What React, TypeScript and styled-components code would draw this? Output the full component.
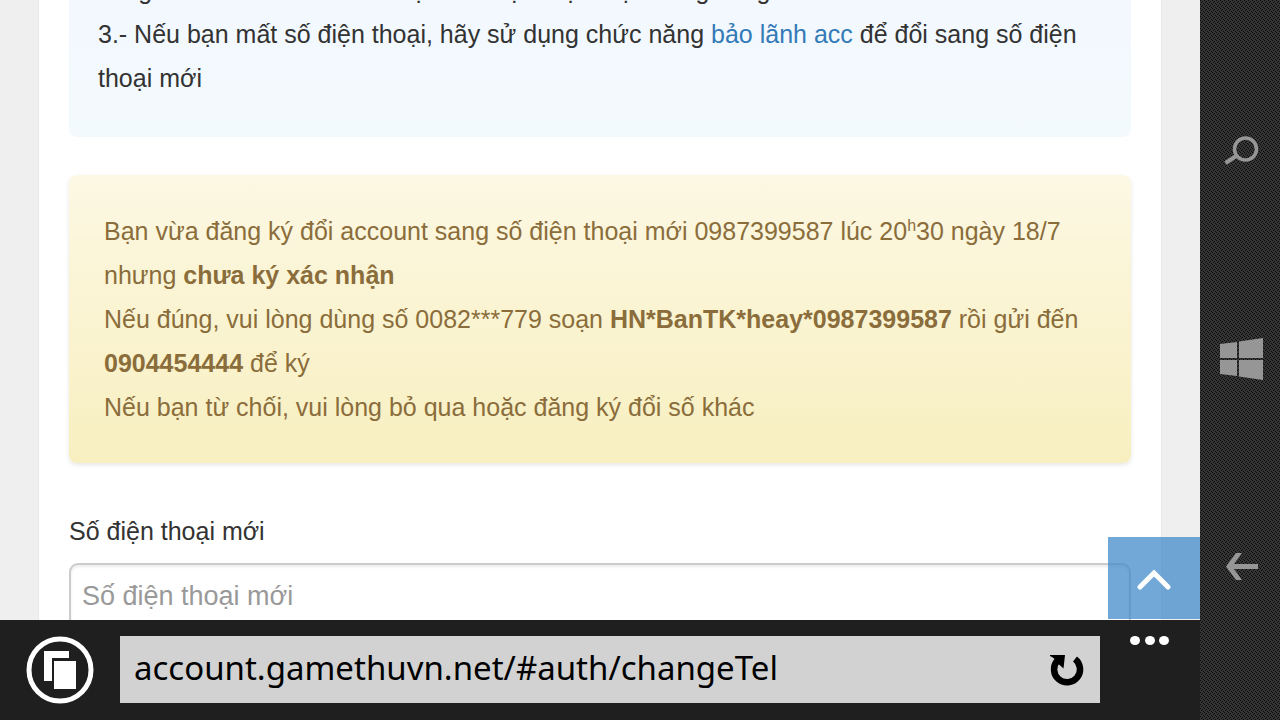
import React from 'react';
import styled, { createGlobalStyle } from 'styled-components';

const GlobalStyle = createGlobalStyle`
  *, *::before, *::after { box-sizing: border-box; }
  body { margin: 0; background: #efefef; }
  button { margin: 0; padding: 0; border: 0; background: none; cursor: pointer; }
`;

const Device = styled.div`
  display: flex;
  height: 100vh;
  overflow: hidden;
  font-family: 'Liberation Sans', Arial, sans-serif;
`;

const Screen = styled.div`
  display: flex;
  flex: 1;
  flex-direction: column;
  min-width: 0;
`;

const Viewport = styled.main`
  position: relative;
  flex: 1;
  min-height: 0;
  overflow: hidden;
  background: #efefef;
`;

const Page = styled.div`
  height: 100%;
  margin: 0 38px;
  padding: 0 30px;
  overflow: hidden;
  border: solid #e8e8e8;
  border-width: 0 1px;
  background: #fff;
  color: #333;
  font-size: 25px;
  line-height: 44px;
`;

const Callout = styled.section`
  border-radius: 8px;

  p { margin: 0; }
`;

const InfoCallout = styled(Callout)`
  margin-top: -32px;
  padding: 0 29px 37px;
  background: linear-gradient(#f2f8fe, #f3fafd);
`;

const WarningCallout = styled(Callout)`
  margin-top: 38px;
  padding: 34px 35px;
  background: linear-gradient(#fcf8e3, #f8efc0);
  box-shadow: 0 2px 4px rgba(0, 0, 0, 0.1);
  color: #8a6d3b;

  sup {
    font-size: 16px;
    line-height: 0;
  }
`;

const TextLink = styled.a`
  color: #337ab7;
  text-decoration: none;
`;

const Field = styled.div`
  display: flex;
  flex-direction: column;
  gap: 10px;
  margin-top: 46px;
`;

const PhoneInput = styled.input`
  width: 100%;
  height: 66px;
  padding: 0 11px;
  border: 2px solid #ccc;
  border-radius: 9px;
  background: #fff;
  box-shadow: inset 0 2px 3px rgba(0, 0, 0, 0.08);
  color: #555;
  font: 27px 'Liberation Sans', Arial, sans-serif;

  &::placeholder { color: #999; opacity: 1; }
`;

const ToTopButton = styled.button`
  position: absolute;
  right: 0;
  bottom: 1px;
  display: flex;
  align-items: center;
  justify-content: center;
  width: 92px;
  height: 82px;
  background: rgba(66, 139, 202, 0.75);
`;

const BrowserBar = styled.footer`
  display: flex;
  height: 100px;
  padding: 16px 0;
  background: #1f1f1f;
`;

const TabsButton = styled.button`
  flex: 0 0 120px;
  height: 68px;

  svg { display: block; margin: 0 auto; }
`;

const AddressBar = styled.form`
  display: flex;
  flex: 1;
  align-items: center;
  min-width: 0;
  height: 67px;
  padding: 0 14px;
  background: #d2d2d2;
`;

const AddressInput = styled.input`
  flex: 1;
  min-width: 0;
  height: 67px;
  padding: 0 0 4px;
  border: 0;
  outline: 0;
  background: transparent;
  color: #000;
  font: 33px 'Noto Sans', 'Open Sans', sans-serif;
`;

const ReloadButton = styled.button`
  width: 38px;
  height: 40px;

  svg { display: block; }
`;

const MoreButton = styled.button`
  flex: 0 0 100px;
  height: 9px;

  svg { display: block; margin: 0 auto; }
`;

const HardwareRail = styled.nav`
  display: flex;
  flex: 0 0 80px;
  flex-direction: column;
  align-items: center;
  justify-content: space-between;
  padding: 128px 0 131px;
  background:
    conic-gradient(at 1px 1px, transparent 270deg, #080808 0) 0 0 / 4px 4px,
    conic-gradient(at 1px 1px, transparent 270deg, #080808 0) 2px 1px / 4px 4px,
    conic-gradient(at 1px 1px, transparent 270deg, #080808 0) 1px 2px / 4px 4px,
    conic-gradient(at 1px 1px, transparent 270deg, #080808 0) 3px 3px / 4px 4px,
    #363636;
`;

const RailButton = styled.button`
  width: 48px;
  height: 44px;
  opacity: 0.85;

  svg { display: block; }
`;

export default function App() {
  return (
    <>
      <GlobalStyle />
      <Device>
        <Screen>
          <Viewport>
            <Page>
              <InfoCallout>
                <p>cũng cần chờ đến khi nhắn lại nếu thực hiện một tháng cùng</p>
                <p>
                  3.- Nếu bạn mất số điện thoại, hãy sử dụng chức năng{' '}
                  <TextLink href="#auth/guarantee">bảo lãnh acc</TextLink> để đổi sang số điện thoại mới
                </p>
              </InfoCallout>
              <WarningCallout>
                <p>
                  Bạn vừa đăng ký đổi account sang số điện thoại mới 0987399587 lúc 20<sup>h</sup>30 ngày
                  18/7 nhưng <b>chưa ký xác nhận</b>
                </p>
                <p>
                  Nếu đúng, vui lòng dùng số 0082***779 soạn <b>HN*BanTK*heay*0987399587</b> rồi gửi đến{' '}
                  <b>0904454444</b> để ký
                </p>
                <p>Nếu bạn từ chối, vui lòng bỏ qua hoặc đăng ký đổi số khác</p>
              </WarningCallout>
              <Field>
                <label htmlFor="new-phone">Số điện thoại mới</label>
                <PhoneInput id="new-phone" type="tel" placeholder="Số điện thoại mới" />
              </Field>
            </Page>
            <ToTopButton type="button" aria-label="Lên đầu trang">
              <svg width="36" height="24" viewBox="0 0 36 24" fill="none" stroke="#fff" strokeWidth="5" strokeLinecap="round">
                <path d="M4 21 L18 7 L32 21" />
              </svg>
            </ToTopButton>
          </Viewport>
          <BrowserBar>
            <TabsButton type="button" aria-label="Tabs">
              <svg width="68" height="68" viewBox="0 0 68 68">
                <circle cx="34" cy="34" r="31" fill="none" stroke="#fff" strokeWidth="5" />
                <path d="M18 15h25v7H26v23h-8z" fill="#fff" />
                <rect x="28" y="25" width="22" height="28" fill="#fff" />
              </svg>
            </TabsButton>
            <AddressBar onSubmit={(e) => e.preventDefault()}>
              <AddressInput aria-label="Address" defaultValue="account.gamethuvn.net/#auth/changeTel" spellCheck={false} />
              <ReloadButton type="button" aria-label="Reload">
                <svg width="38" height="40" viewBox="0 0 38 40">
                  <path d="M27 9A13 13 0 1 1 9.500 10.500" fill="none" stroke="#000" strokeWidth="6.500" />
                  <path d="M2 5H17L15.500 18.500L10.500 14Q7 8 2 6Z" fill="#000" />
                </svg>
              </ReloadButton>
            </AddressBar>
            <MoreButton type="button" aria-label="More">
              <svg width="40" height="9" viewBox="0 0 40 9" fill="#fff">
                <ellipse cx="5" cy="4.500" rx="5" ry="4.500" />
                <ellipse cx="20" cy="4.500" rx="5" ry="4.500" />
                <ellipse cx="34" cy="4.500" rx="5" ry="4.500" />
              </svg>
            </MoreButton>
          </BrowserBar>
        </Screen>
        <HardwareRail aria-label="Device">
          <RailButton type="button" aria-label="Search">
            <svg width="48" height="44" viewBox="0 0 48 44" fill="none" stroke="#aaa" strokeWidth="3.500">
              <circle cx="29.5" cy="21" r="11" />
              <path d="M21 27.500L9.500 35" strokeWidth="4" />
            </svg>
          </RailButton>
          <RailButton type="button" aria-label="Start">
            <svg width="48" height="44" viewBox="0 0 48 44" fill="#aaa">
              <path d="M4 7L21 5V21H4ZM23 4.500L47 1V21H23ZM4 23H21V39L4 37ZM23 23H47V43L23 39.500Z" />
            </svg>
          </RailButton>
          <RailButton type="button" aria-label="Back">
            <svg width="48" height="44" viewBox="0 0 48 44" fill="#aaa">
              <path d="M10 21.500L20 8H26L18 19H42V24H18L26 35H20Z" />
            </svg>
          </RailButton>
        </HardwareRail>
      </Device>
    </>
  );
}
